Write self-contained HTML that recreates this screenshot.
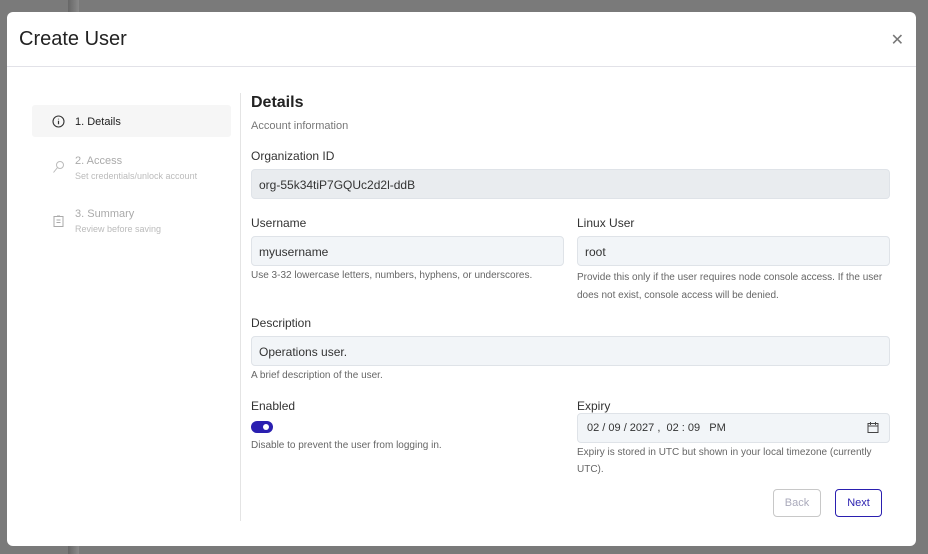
<!DOCTYPE html>
<html><head><style>
*{box-sizing:border-box;margin:0;padding:0}
body{width:928px;height:554px;background:#7a7a7a;font-family:"Liberation Sans",sans-serif;position:relative;overflow:hidden}
.strip{position:absolute;left:68px;top:0;width:11px;height:554px;background:linear-gradient(90deg,#666,#8a8a8a)}
.modal{position:absolute;left:7px;top:12px;width:909px;height:534px;background:#fff;border-radius:6px}
.hd{height:55px;border-bottom:1px solid #e2e2e8;position:relative}
.hd h1{position:absolute;left:12px;top:16px;font-size:20px;font-weight:normal;color:#222}
.x{position:absolute;right:12px;top:18px;font-size:16px;color:#777}
.a{position:absolute}
.side{left:25px;top:93px;width:199px;height:32px;background:#f6f6f6;border-radius:3px}
.vr{left:233px;top:81px;width:1px;height:428px;background:#e4e4e4}
.t{position:absolute;white-space:nowrap}
.lbl{font-size:12px;color:#333}
.hint{font-size:10px;color:#666}
.inp{position:absolute;height:30px;border:1px solid #dfe3e8;background:#f2f5f8;border-radius:4px;font-size:12px;color:#333;padding:8px 7px}
.btn{position:absolute;height:28px;border-radius:4px;font-size:11px;text-align:center;line-height:26px;background:#fff}
</style></head><body>
<div class="strip"></div>
<div class="modal">
<div class="hd"><h1>Create User</h1><div class="x">✕</div></div>
<div class="a side"></div>
<div class="a vr"></div>
<svg class="a" style="left:45px;top:103px" width="13" height="13" viewBox="0 0 13 13"><circle cx="6.5" cy="6.5" r="5.5" fill="none" stroke="#333" stroke-width="1.1"/><path d="M6.5 5.8v3.5M6.5 3.8v.6" stroke="#333" stroke-width="1.2"/></svg>
<div class="t" style="left:68px;top:104px;font-size:11px;color:#222">1. Details</div>
<svg class="a" style="left:45px;top:148px" width="13" height="14" viewBox="0 0 13 14"><circle cx="8" cy="5" r="3.5" fill="none" stroke="#bbb"/><path d="M5.5 7.5L1.5 12.5" stroke="#bbb"/></svg>
<div class="t" style="left:68px;top:143px;font-size:11px;color:#aaa">2. Access</div>
<div class="t" style="left:68px;top:159px;font-size:9px;color:#bbb">Set credentials/unlock account</div>
<svg class="a" style="left:46px;top:203px" width="11" height="12" viewBox="0 0 11 12"><rect x="1" y="1.5" width="9" height="10" fill="none" stroke="#aaa"/><path d="M3.5 5h4M3.5 7.5h4M4 1h3" stroke="#aaa"/></svg>
<div class="t" style="left:68px;top:196px;font-size:11px;color:#aaa">3. Summary</div>
<div class="t" style="left:68px;top:212px;font-size:9px;color:#bbb">Review before saving</div>

<div class="t" style="left:244px;top:82px;font-size:16px;font-weight:bold;color:#222">Details</div>
<div class="t" style="left:244px;top:108px;font-size:11px;color:#777">Account information</div>
<div class="t lbl" style="left:244px;top:137px">Organization ID</div>
<div class="inp" style="left:244px;top:157px;width:639px;background:#e9ecef">org-55k34tiP7GQUc2d2l-ddB</div>
<div class="t lbl" style="left:244px;top:204px">Username</div>
<div class="inp" style="left:244px;top:224px;width:313px">myusername</div>
<div class="t hint" style="left:244px;top:258px">Use 3-32 lowercase letters, numbers, hyphens, or underscores.</div>
<div class="t lbl" style="left:570px;top:204px">Linux User</div>
<div class="inp" style="left:570px;top:224px;width:313px">root</div>
<div class="t hint" style="left:570px;top:257px;line-height:18px;white-space:normal;width:318px">Provide this only if the user requires node console access. If the user does not exist, console access will be denied.</div>
<div class="t lbl" style="left:244px;top:304px">Description</div>
<div class="inp" style="left:244px;top:324px;width:639px">Operations user.</div>
<div class="t hint" style="left:244px;top:358px">A brief description of the user.</div>
<div class="t lbl" style="left:244px;top:387px">Enabled</div>
<div class="a" style="left:244px;top:409px;width:22px;height:12px;border-radius:6px;background:#2a1fb0"><div class="a" style="left:12px;top:3px;width:6px;height:6px;border-radius:3px;background:#fff"></div></div>
<div class="t hint" style="left:244px;top:428px">Disable to prevent the user from logging in.</div>
<div class="t lbl" style="left:570px;top:387px">Expiry</div>
<div class="inp" style="left:570px;top:401px;width:313px;font-size:11px;padding-left:9px;white-space:pre">02 / 09 / 2027 ,  02 : 09   PM</div>
<svg class="a" style="left:860px;top:409px" width="12" height="13" viewBox="0 0 12 13"><rect x="1" y="2.5" width="10" height="9" fill="none" stroke="#444"/><path d="M1 5h10M3.5 1v3M8.5 1v3" stroke="#444"/></svg>
<div class="t hint" style="left:570px;top:432px;line-height:17px;white-space:normal;width:312px">Expiry is stored in UTC but shown in your local timezone (currently UTC).</div>
<div class="btn" style="left:766px;top:477px;width:48px;border:1px solid #c8c8c8;color:#aab">Back</div>
<div class="btn" style="left:828px;top:477px;width:47px;border:1px solid #2a1fb0;color:#2a1fb0">Next</div>
</div>
</body></html>
